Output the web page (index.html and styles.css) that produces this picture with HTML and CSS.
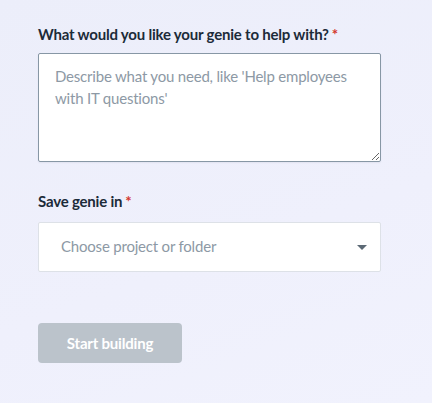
FILE: index.html
```html
<!DOCTYPE html>
<html>
<head>
<meta charset="utf-8">
<link rel="stylesheet" href="styles.css">
</head>
<body>
<form class="form">
  <div class="field">
    <label class="label">What would you like your genie to help with?<span class="req">*</span></label>
    <textarea class="textarea" placeholder="Describe what you need, like 'Help employees with IT questions'"></textarea>
  </div>
  <div class="field field-select">
    <label class="label">Save genie in<span class="req">*</span></label>
    <div class="select">
      <span class="select-placeholder">Choose project or folder</span>
      <svg class="caret" width="10" height="5" viewBox="0 0 10 5"><path d="M0 0H10L5 5Z" fill="#5c6975"/></svg>
    </div>
  </div>
  <button type="button" class="btn" disabled>Start building</button>
</form>
</body>
</html>
```
FILE: styles.css
```css
html, body {
  margin: 0;
  padding: 0;
}
body {
  width: 432px;
  height: 403px;
  overflow: hidden;
  background: linear-gradient(160deg, #eceefa 0%, #eff0fc 60%, #f1f2fd 100%);
  font-family: Lato, "Noto Sans", sans-serif;
}
.form {
  padding: 24px 0 0 38px;
  width: 343px;
  display: flex;
  flex-direction: column;
}
.field {
  display: flex;
  flex-direction: column;
}
.label {
  font-size: 15px;
  line-height: 20px;
  font-weight: 700;
  letter-spacing: -0.2px;
  color: #1c2b39;
  margin-bottom: 9px;
}
.req {
  color: #d4372c;
  margin-left: 3px;
}
.textarea {
  box-sizing: border-box;
  width: 343px;
  height: 109px;
  margin: 0;
  border: 1px solid #8797a5;
  border-radius: 2px;
  background: #fff;
  padding: 11px 16px;
  font-family: Lato, "Noto Sans", sans-serif;
  font-size: 15px;
  line-height: 22px;
  letter-spacing: -0.2px;
  color: #1c2b39;
  resize: vertical;
  box-shadow: 0 1px 2px rgba(30, 40, 60, 0.06);
}
.textarea::placeholder {
  color: #8d99a5;
}
.field-select {
  margin-top: 29px;
}
.field-select .label {
  margin-bottom: 11px;
}
.select {
  box-sizing: border-box;
  width: 343px;
  height: 50px;
  border: 1px solid #dde1e7;
  border-radius: 2px;
  background: #fff;
  display: flex;
  align-items: center;
  justify-content: space-between;
  padding: 0 13px 0 22px;
}
.select-placeholder {
  font-size: 15px;
  letter-spacing: -0.2px;
  color: #8d99a5;
  margin-top: -2px;
}
.caret {
  display: block;
}
.btn {
  align-self: flex-start;
  margin-top: 51px;
  width: 144px;
  height: 40px;
  border: none;
  border-radius: 4px;
  background: #bbc3cb;
  color: #fff;
  font-family: Lato, "Noto Sans", sans-serif;
  font-size: 15px;
  font-weight: 700;
  letter-spacing: -0.2px;
  padding: 0;
}
```
